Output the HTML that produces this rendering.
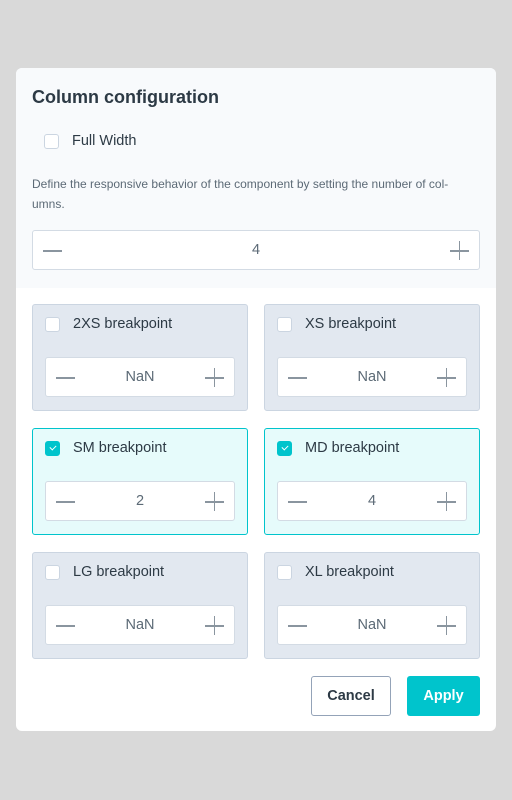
<!DOCTYPE html>
<html><head><style>
*{box-sizing:border-box;margin:0;padding:0}
body{width:512px;height:800px;background:#d9d9d9;font-family:"Liberation Sans",sans-serif;position:relative;overflow:hidden;color:#2d3a45}
.modal{position:absolute;left:16px;top:68px;width:480px;height:663px;background:#fff;border-radius:6px;overflow:hidden}
.top{position:absolute;left:0;top:0;width:480px;height:220px;background:#f8fafc}
.abs{position:absolute}
h1{position:absolute;left:16px;top:19px;font-size:18px;font-weight:bold;color:#2d3a45}
.cb{position:absolute;width:15px;height:15px;border:1px solid #cbd5e1;border-radius:3px;background:#fff}
.cb.on{background:#00c4cc;border-color:#00c4cc}
.cb.on:after{content:"";position:absolute;left:4px;top:3px;width:5px;height:3px;border-left:1.3px solid #fff;border-bottom:1.3px solid #fff;transform:rotate(-45deg)}
.step{position:absolute;background:#fff;border:1px solid #d3dbe4;border-radius:3px;height:40px}
.step .m{position:absolute;left:10px;top:19px;width:19px;height:1.5px;background:#8a959f}
.step .p{position:absolute;right:10px;top:19px;width:19px;height:1.5px;background:#8a959f}
.step .p:after{content:"";position:absolute;left:8.75px;top:-8.75px;width:1.5px;height:19px;background:#8a959f}
.step .v{position:absolute;left:0;right:0;top:11px;text-align:center;font-size:14.5px;color:#5c6a76}
.card{position:absolute;width:216px;height:107px;background:#e2e8f0;border:1px solid #cbd5e1;border-radius:3px}
.card.on{background:#e6fbfb;border-color:#00c4cc}
.card .cb{left:12px;top:12px}
.card .lbl{position:absolute;left:40px;top:11px;font-size:14.5px;color:#2d3a45}
.card .step{left:12px;top:52px;width:190px}
.btn{position:absolute;top:608px;height:40px;border-radius:3px;font-size:14.5px;font-weight:bold;text-align:center;line-height:38px}
</style></head><body>
<div class="modal">
<div class="top"></div>
<h1>Column configuration</h1>
<div class="cb" style="left:28px;top:66px"></div>
<div class="abs" style="left:56px;top:65px;font-size:14.5px">Full Width</div>
<div class="abs" style="left:16px;top:106px;width:455px;font-size:12px;line-height:20px;color:#5c6a76">Define the responsive behavior of the component by setting the number of col-<br>umns.</div>
<div class="step" style="left:16px;top:162px;width:448px"><div class="m"></div><div class="v">4</div><div class="p"></div></div>

<div class="card" style="left:16px;top:236px"><div class="cb"></div><div class="lbl">2XS breakpoint</div><div class="step"><div class="m"></div><div class="v">NaN</div><div class="p"></div></div></div>
<div class="card" style="left:248px;top:236px"><div class="cb"></div><div class="lbl">XS breakpoint</div><div class="step"><div class="m"></div><div class="v">NaN</div><div class="p"></div></div></div>
<div class="card on" style="left:16px;top:360px"><div class="cb on"></div><div class="lbl">SM breakpoint</div><div class="step"><div class="m"></div><div class="v">2</div><div class="p"></div></div></div>
<div class="card on" style="left:248px;top:360px"><div class="cb on"></div><div class="lbl">MD breakpoint</div><div class="step"><div class="m"></div><div class="v">4</div><div class="p"></div></div></div>
<div class="card" style="left:16px;top:484px"><div class="cb"></div><div class="lbl">LG breakpoint</div><div class="step"><div class="m"></div><div class="v">NaN</div><div class="p"></div></div></div>
<div class="card" style="left:248px;top:484px"><div class="cb"></div><div class="lbl">XL breakpoint</div><div class="step"><div class="m"></div><div class="v">NaN</div><div class="p"></div></div></div>

<div class="btn" style="left:295px;width:80px;border:1px solid #94a3b8;color:#2d3a45;background:#fff">Cancel</div>
<div class="btn" style="left:391px;width:73px;background:#00c4cc;color:#fff;line-height:40px">Apply</div>
</div>
</body></html>
